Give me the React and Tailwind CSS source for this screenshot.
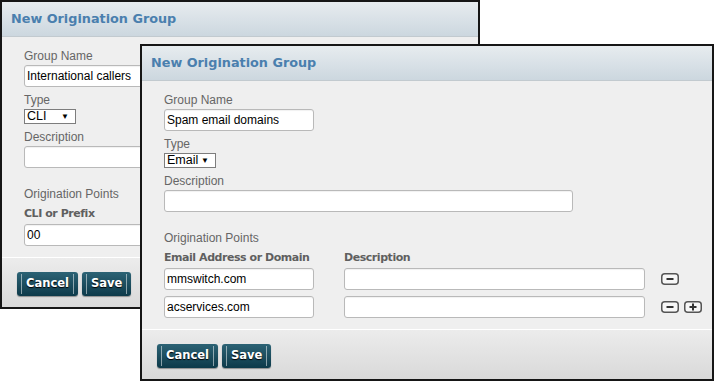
import React from 'react';

const label = "font-['Liberation_Sans',Arial,sans-serif] text-[12px] leading-[14px] text-[#666]";
const colHead = "font-['DejaVu_Sans',Verdana,sans-serif] font-bold text-[11px] leading-[14px] tracking-[-0.45px] text-[#5f5f5f]";
const field = "h-[22px] shrink-0 bg-white border border-[#b9b9b9] rounded-[3px] px-[2px] flex items-center font-['Liberation_Sans',Arial,sans-serif] text-[12px] text-black shadow-[inset_0_1px_1px_rgba(0,0,0,0.06)]";

const Field = ({ value, className = '' }) => (
  <div className={`${field} ${className}`}>{value}</div>
);

const Dropdown = ({ value }) => (
  <div className="h-[15px] w-[52px] bg-white border border-[#7d7d7d] flex items-center justify-between pl-[2px] pr-[6px] font-['Liberation_Sans',Arial,sans-serif] text-[12.5px] leading-none text-black">
    <span>{value}</span>
    <span className="text-[8px]">▼</span>
  </div>
);

const Button = ({ children }) => (
  <button className="h-[24px] px-[4px] rounded-[3px] bg-gradient-to-b from-[#2c6375] to-[#0d3a4a] shadow-[0_1px_1px_rgba(0,0,0,0.35)]">
    <span className="h-[20px] flex items-center px-[4px] border-x border-white/50 font-['DejaVu_Sans',Verdana,sans-serif] font-bold text-[11.5px] text-white [text-shadow:0_1px_1px_#000]">
      {children}
    </span>
  </button>
);

// little rounded minus / plus control
const RowIcon = ({ plus }) => (
  <svg width="18" height="12" viewBox="0 0 18 12">
    <rect x="0.75" y="0.75" width="16.5" height="10.5" rx="3" fill="#f7f7f7" stroke="#555" strokeWidth="1.5" />
    <rect x="5.5" y="5" width="7" height="2" fill="#333" />
    {plus && <rect x="8" y="2.5" width="2" height="7" fill="#333" />}
  </svg>
);

const Window = ({ className, children }) => (
  <div className={`absolute flex flex-col border-2 border-[#161616] bg-[#efefef] ${className}`}>
    <div className="h-[35px] shrink-0 flex items-center pl-[9px] border-b border-[#c2cacf] bg-gradient-to-b from-[#e7ecef] to-[#ccd7df]">
      <h2 className="font-['DejaVu_Sans',Verdana,sans-serif] font-bold text-[12.8px] text-[#4a7fae]">New Origination Group</h2>
    </div>
    <div className="px-[22px] pt-[12px] pb-[11px] flex flex-col">{children}</div>
    <div className="border-t border-white bg-gradient-to-b from-[#ececec] to-[#d9d9d9] pl-[15px] pt-[14px] pb-[11px] flex gap-[4px]">
      <Button>Cancel</Button>
      <Button>Save</Button>
    </div>
  </div>
);

export default function App() {
  return (
    <div className="relative w-[714px] h-[381px] bg-white overflow-hidden">
      {/* back window */}
      <Window className="left-0 top-0 w-[480px]">
        <span className={label}>Group Name</span>
        <Field value="International callers" className="mt-[2px] w-[150px]" />
        <span className={`${label} mt-[6px]`}>Type</span>
        <div className="mt-[2px]"><Dropdown value="CLI" /></div>
        <span className={`${label} mt-[6px]`}>Description</span>
        <Field value="" className="mt-[2px] w-[409px]" />
        <span className={`${label} mt-[19px] text-[#6f7d89]`}>Origination Points</span>
        <span className={`${colHead} mt-[6px]`}>CLI or Prefix</span>
        <Field value="00" className="mt-[3px] w-[150px]" />
      </Window>

      {/* front window */}
      <Window className="left-[140px] top-[44px] w-[574px]">
        <span className={label}>Group Name</span>
        <Field value="Spam email domains" className="mt-[2px] w-[150px]" />
        <span className={`${label} mt-[6px]`}>Type</span>
        <div className="mt-[2px]"><Dropdown value="Email" /></div>
        <span className={`${label} mt-[6px]`}>Description</span>
        <Field value="" className="mt-[2px] w-[409px]" />
        <span className={`${label} mt-[19px] text-[#6f7d89]`}>Origination Points</span>
        <div className="mt-[6px] flex gap-[30px]">
          <span className={`${colHead} w-[150px]`}>Email Address or Domain</span>
          <span className={colHead}>Description</span>
        </div>
        <div className="mt-[3px] flex flex-col gap-[6px]">
          {[
            { v: 'mmswitch.com', plus: false },
            { v: 'acservices.com', plus: true },
          ].map((row) => (
            <div key={row.v} className="flex items-center">
              <Field value={row.v} className="w-[150px]" />
              <Field value="" className="ml-[30px] w-[301px]" />
              <div className="ml-[16px] flex gap-[5px]">
                <RowIcon />
                {row.plus && <RowIcon plus />}
              </div>
            </div>
          ))}
        </div>
      </Window>
    </div>
  );
}
